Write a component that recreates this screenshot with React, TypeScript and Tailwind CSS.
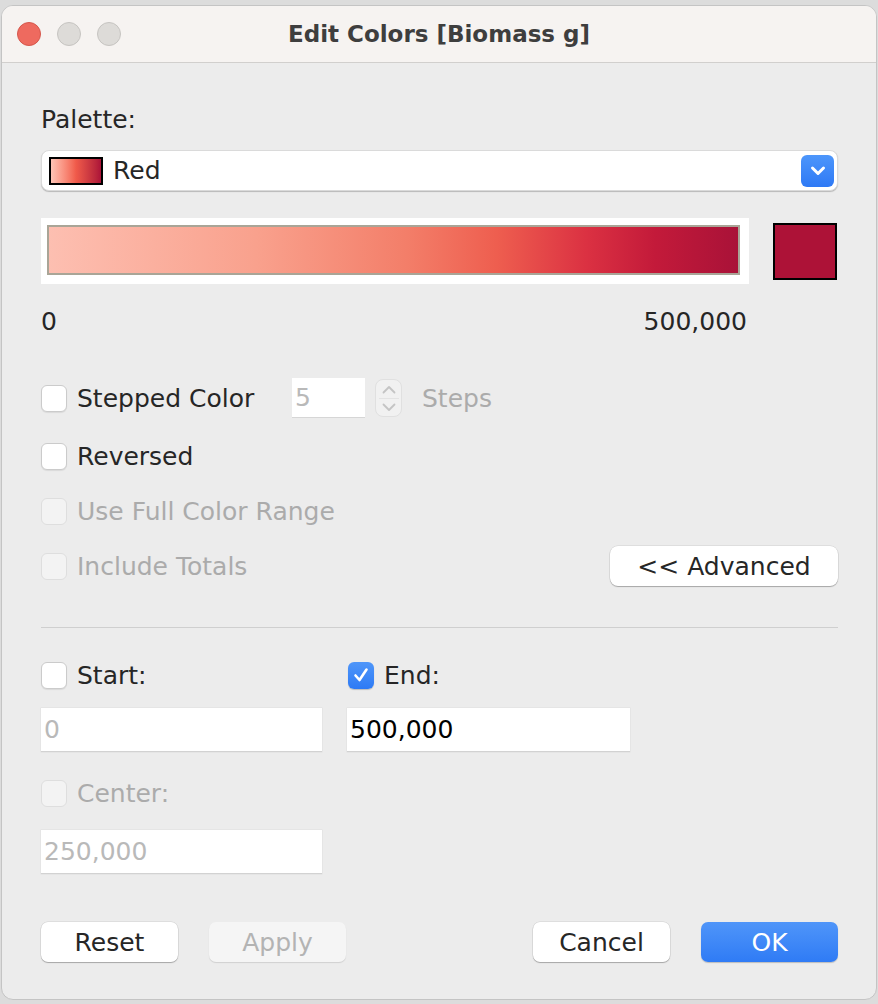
import React from 'react';

const font = { fontFamily: '"DejaVu Sans", "Liberation Sans", sans-serif' };

const Checkbox: React.FC<{ checked?: boolean; disabled?: boolean }> = ({ checked, disabled }) => {
  if (checked) {
    return (
      <div className="w-[26px] h-[27px] rounded-[6px] bg-gradient-to-b from-[#4f96f9] to-[#2d7af5] shadow-[0_1px_1px_rgba(0,0,0,0.2)] flex items-center justify-center shrink-0">
        <svg width="18" height="18" viewBox="0 0 18 18">
          <path d="M3.5 9.5 L7.5 14 L14.5 3.5" fill="none" stroke="white" strokeWidth="2.6" strokeLinecap="round" strokeLinejoin="round" />
        </svg>
      </div>
    );
  }
  return (
    <div
      className={`w-[26px] h-[27px] rounded-[6px] border shrink-0 ${
        disabled ? 'bg-[#f3f3f3] border-[#dedede]' : 'bg-white border-[#cbcbcb] shadow-[0_1px_1px_rgba(0,0,0,0.08)]'
      }`}
    />
  );
};

const CheckRow: React.FC<{ label: string; checked?: boolean; disabled?: boolean }> = ({ label, checked, disabled }) => (
  <div className="flex items-center gap-[10px]">
    <Checkbox checked={checked} disabled={disabled} />
    <span className={disabled ? 'text-[#ababab]' : 'text-[#262626]'}>{label}</span>
  </div>
);

const Button: React.FC<{ label: string; kind?: 'normal' | 'disabled' | 'primary' }> = ({ label, kind = 'normal' }) => {
  const cls =
    kind === 'primary'
      ? 'bg-gradient-to-b from-[#4f95f9] to-[#2f7bf5] text-white shadow-[0_1px_1px_rgba(0,0,0,0.2)]'
      : kind === 'disabled'
      ? 'bg-[#f5f5f5] text-[#b3b3b3] shadow-[0_1px_1px_rgba(0,0,0,0.12)]'
      : 'bg-white text-[#262626] shadow-[0_0_0_0.5px_rgba(0,0,0,0.12),0_1px_1px_rgba(0,0,0,0.25)]';
  return (
    <div className={`w-[137px] h-[40px] rounded-[7px] flex items-center justify-center ${cls}`}>{label}</div>
  );
};

const TextField: React.FC<{ value: string; disabled?: boolean; width: string }> = ({ value, disabled, width }) => (
  <div
    className={`${width} h-[44px] bg-white border-b border-[#d2d2d2] shadow-[0_0_0_0.5px_rgba(0,0,0,0.06)] flex items-center pl-[3px] ${
      disabled ? 'text-[#b9b9b9]' : 'text-black'
    }`}
  >
    {value}
  </div>
);

const App: React.FC = () => {
  return (
    <div className="w-[878px] h-[1004px] bg-[#dcdcdc] pt-[5px] overflow-hidden" style={font}>
      <div className="mx-[1px] w-[876px] rounded-[12px] border border-[#c4c4c4] overflow-hidden bg-[#ececec] text-[25px] leading-none">
        {/* Title bar */}
        <div className="h-[57px] bg-[#f6f3f1] border-b border-[#d1cfcd] grid grid-cols-[1fr_auto_1fr] items-center">
          <div className="flex items-center gap-[16px] pl-[15px]">
            <div className="w-[24px] h-[24px] rounded-full bg-[#ee6a5f] border border-[#d5574c]" />
            <div className="w-[24px] h-[24px] rounded-full bg-[#dddbd8] border border-[#c6c4c1]" />
            <div className="w-[24px] h-[24px] rounded-full bg-[#dddbd8] border border-[#c6c4c1]" />
          </div>
          <div className="text-[23px] font-bold text-[#3e3e3e]">Edit Colors [Biomass g]</div>
          <div />
        </div>

        {/* Body */}
        <div className="pl-[39px] pr-[38px] pb-[37px]">
          <div className="mt-[43px] h-[26px] flex items-center text-[#262626]">Palette:</div>

          {/* Palette dropdown */}
          <div className="mt-[18px] h-[41px] bg-white rounded-[8px] border border-[#dadada] shadow-[0_1px_1px_rgba(0,0,0,0.22)] flex items-center pl-[7px] pr-[3px]">
            <div className="w-[54px] h-[28px] border-2 border-black bg-gradient-to-r from-[#fdc4b6] via-[#f05a4a] to-[#ac1238]" />
            <span className="ml-[10px] text-[#262626]">Red</span>
            <div className="ml-auto w-[33px] h-[32px] rounded-[6px] bg-gradient-to-b from-[#4d96fb] to-[#2e79f5] flex items-center justify-center">
              <svg width="18" height="12" viewBox="0 0 18 12">
                <path d="M3.5 3 L9 8.5 L14.5 3" fill="none" stroke="white" strokeWidth="3" strokeLinecap="round" strokeLinejoin="round" />
              </svg>
            </div>
          </div>

          {/* Gradient bar and swatch */}
          <div className="mt-[27px] h-[66px] flex items-center">
            <div className="w-[708px] h-[66px] bg-white pl-[6px] pr-[9px] pt-[7px] pb-[9px]">
              <div className="w-full h-full border-2 border-[#a9a597] bg-[linear-gradient(to_right,#fdbfb1_0%,#f9a18d_30%,#f37e69_52%,#ee5e4f_65%,#db3142_78%,#c31a3a_88%,#a91238_100%)]" />
            </div>
            <div className="ml-[24px] w-[64px] h-[57px] border-2 border-black bg-[#ad1237]" />
          </div>

          {/* Range labels */}
          <div className="mt-[24px] h-[26px] w-[706px] flex items-center justify-between text-[#262626]">
            <span>0</span>
            <span>500,000</span>
          </div>

          {/* Stepped color */}
          <div className="mt-[44px] h-[40px] flex items-center">
            <div className="w-[251px]">
              <CheckRow label="Stepped Color" />
            </div>
            <div className="w-[73px] h-[40px] bg-white border-b border-[#d6d6d6] flex items-center pl-[3px] text-[#b9b9b9]">5</div>
            <div className="ml-[10px] w-[27px] h-[38px] rounded-[8px] bg-[#f1f1f1] border border-[#e0e0e0] flex flex-col items-center justify-center gap-[4px]">
              <svg width="16" height="9" viewBox="0 0 16 9">
                <path d="M2.5 7.5 L8 2 L13.5 7.5" fill="none" stroke="#c4c4c4" strokeWidth="1.8" strokeLinecap="round" strokeLinejoin="round" />
              </svg>
              <div className="w-[20px] h-[1px] bg-[#e3e3e3]" />
              <svg width="16" height="9" viewBox="0 0 16 9">
                <path d="M2.5 1.5 L8 7 L13.5 1.5" fill="none" stroke="#c4c4c4" strokeWidth="1.8" strokeLinecap="round" strokeLinejoin="round" />
              </svg>
            </div>
            <span className="ml-[20px] text-[#ababab]">Steps</span>
          </div>

          <div className="mt-[24px] h-[28px] flex items-center">
            <CheckRow label="Reversed" />
          </div>

          <div className="mt-[27px] h-[28px] flex items-center">
            <CheckRow label="Use Full Color Range" disabled />
          </div>

          <div className="mt-[21px] h-[40px] flex items-center justify-between">
            <CheckRow label="Include Totals" disabled />
            <div className="w-[228px] h-[40px] rounded-[8px] bg-white text-[#262626] shadow-[0_0_0_0.5px_rgba(0,0,0,0.12),0_1px_1px_rgba(0,0,0,0.25)] flex items-center justify-center">
              &lt;&lt; Advanced
            </div>
          </div>

          <div className="mt-[41px] h-[1px] bg-[#cfcfcf]" />

          {/* Start / End */}
          <div className="mt-[33px] h-[28px] flex items-center">
            <div className="w-[307px]">
              <CheckRow label="Start:" />
            </div>
            <CheckRow label="End:" checked />
          </div>
          <div className="mt-[19px] flex">
            <TextField value="0" disabled width="w-[281px]" />
            <div className="ml-[25px]">
              <TextField value="500,000" width="w-[283px]" />
            </div>
          </div>

          <div className="mt-[27px] h-[28px] flex items-center">
            <CheckRow label="Center:" disabled />
          </div>
          <div className="mt-[23px] flex">
            <TextField value="250,000" disabled width="w-[281px]" />
          </div>

          {/* Buttons */}
          <div className="mt-[48px] h-[40px] flex items-center">
            <Button label="Reset" />
            <div className="ml-[31px]">
              <Button label="Apply" kind="disabled" />
            </div>
            <div className="ml-auto">
              <Button label="Cancel" />
            </div>
            <div className="ml-[31px]">
              <Button label="OK" kind="primary" />
            </div>
          </div>
        </div>
      </div>
    </div>
  );
};

export default App;
